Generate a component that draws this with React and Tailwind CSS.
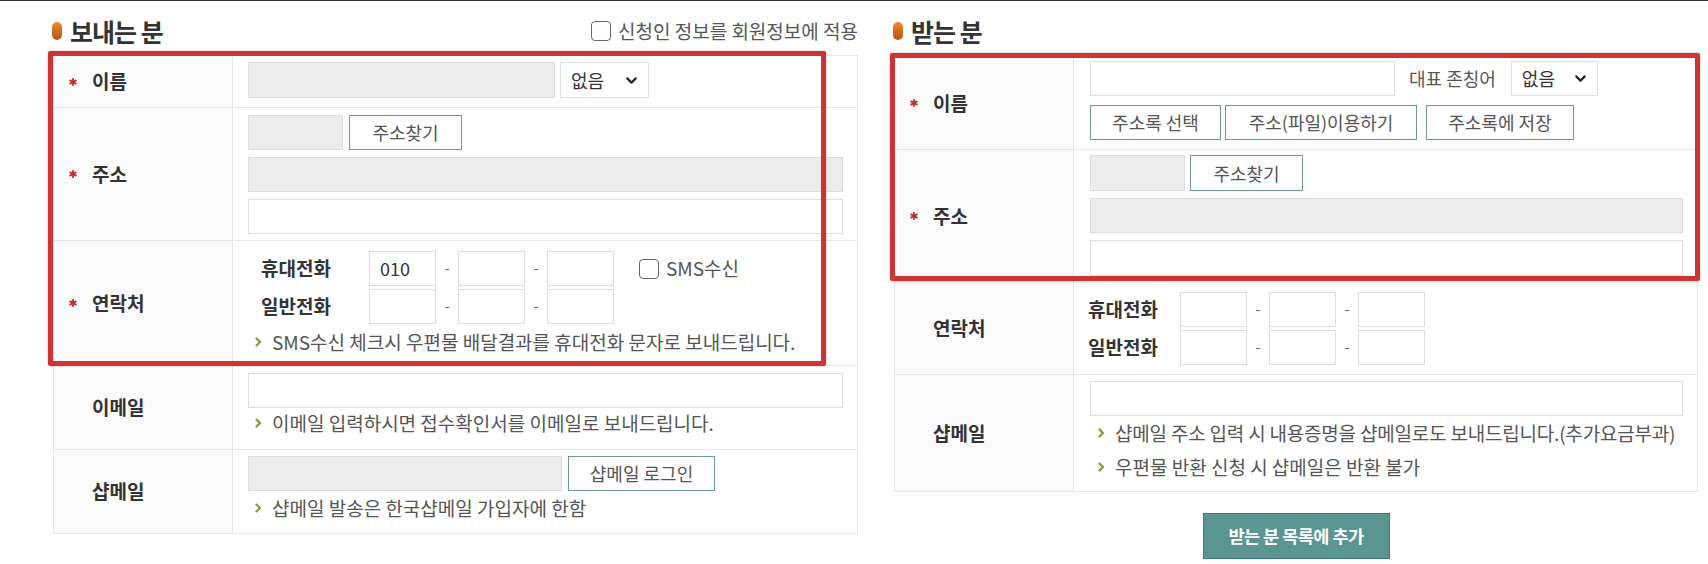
import { ChevronDown } from 'lucide-react';

const FONT = "font-['Noto_Sans_CJK_KR','Noto_Sans',sans-serif]";

function Arrow() {
  return (
    <svg width="7" height="10" viewBox="0 0 7 10" className="shrink-0">
      <path d="M1.5 1.5 L5 5 L1.5 8.5" fill="none" stroke="#8a9d3e" strokeWidth="2.4" strokeLinecap="round" strokeLinejoin="round" />
    </svg>
  );
}

function Star() {
  return (
    <svg width="8" height="8" viewBox="0 0 8 8" className="shrink-0">
      <g stroke="#b8322f" strokeWidth="1.8" strokeLinecap="round">
        <line x1="4" y1="0.8" x2="4" y2="7.2" />
        <line x1="1.2" y1="2.4" x2="6.8" y2="5.6" />
        <line x1="1.2" y1="5.6" x2="6.8" y2="2.4" />
      </g>
    </svg>
  );
}

function Help({ children, className = '' }) {
  return (
    <div className={`flex items-center gap-[10px] text-[19px] leading-[20px] text-[#555] whitespace-nowrap ${className}`}>
      <Arrow />
      <span>{children}</span>
    </div>
  );
}

function Field({ gray, className = '', value }) {
  return (
    <div
      className={`h-[35px] border border-[#dcdcdc] flex items-center pl-[10px] text-[18px] text-[#333] ${
        gray ? 'bg-[#ececec]' : 'bg-white'
      } ${className}`}
    >
      {value}
    </div>
  );
}

function Btn({ children, className = '' }) {
  return (
    <button className={`h-[35px] border border-[#6f9896] bg-white text-[18px] text-[#555] flex items-center justify-center ${className}`}>
      {children}
    </button>
  );
}

function Select({ className = '' }) {
  return (
    <div className={`h-[35px] border border-[#e0e0e0] bg-white flex items-center justify-between pl-[10px] pr-[8px] text-[18px] text-[#333] ${className}`}>
      <span>없음</span>
      <ChevronDown size={17} strokeWidth={3} className="text-[#222]" />
    </div>
  );
}

function Check({ label }) {
  return (
    <div className="flex items-center gap-[7px] text-[19px] text-[#555]">
      <span className="w-[20px] h-[20px] rounded-[4px] border-[1.5px] border-[#666] bg-white" />
      <span>{label}</span>
    </div>
  );
}

function Label({ req, children }) {
  return (
    <div className="bg-[#fafafa] border-r border-[#e6e6e6] flex items-center pl-[15px]">
      <span className="w-[23px] flex items-center">{req && <Star />}</span>
      <span className="text-[19px] font-bold text-[#333]">{children}</span>
    </div>
  );
}

function Row({ label, req, children, last }) {
  return (
    <div className={`grid grid-cols-[179px_1fr] ${last ? '' : 'border-b border-[#e6e6e6]'}`}>
      <Label req={req}>{label}</Label>
      {children}
    </div>
  );
}

function PhoneRow({ label, first, labelW }) {
  return (
    <div className="flex items-center">
      <span className={`text-[19px] font-bold text-[#333] ${labelW}`}>{label}</span>
      <Field className="w-[67px]" value={first} />
      <span className="w-[22px] text-center text-[#666] text-[15px]">-</span>
      <Field className="w-[67px]" />
      <span className="w-[22px] text-center text-[#666] text-[15px]">-</span>
      <Field className="w-[67px]" />
    </div>
  );
}

function Title({ children }) {
  return (
    <div className="flex items-center gap-[8px] -ml-[1px]">
      <span className="w-[10px] h-[18px] rounded-full bg-gradient-to-b from-[#f08a2c] to-[#b55510]" />
      <span className="text-[25px] leading-[34px] font-bold tracking-[-1px] text-[#333]">{children}</span>
    </div>
  );
}

export default function App() {
  return (
    <div className={`w-[1708px] h-[564px] bg-white overflow-hidden ${FONT}`}>
      <div className="h-[1px] bg-[#333]" />
      <div className="flex pl-[53px]">
        {/* 보내는 분 */}
        <div className="w-[805px]">
          <div className="h-[54px] pt-[13px] flex items-start justify-between">
            <Title>보내는 분</Title>
            <div className="mt-[3px]">
              <Check label="신청인 정보를 회원정보에 적용" />
            </div>
          </div>
          <div className="relative border border-[#e6e6e6]">
            <Row label="이름" req>
              <div className="h-[51px] pl-[15px] pt-[6px] flex gap-[5px]">
                <Field gray className="w-[307px] h-[36px]" />
                <Select className="w-[89px] h-[36px]" />
              </div>
            </Row>
            <Row label="주소" req>
              <div className="h-[132px] pl-[15px] pr-[14px] pt-[7px] flex flex-col gap-[7px]">
                <div className="flex gap-[6px]">
                  <Field gray className="w-[95px]" />
                  <Btn className="w-[113px]">주소찾기</Btn>
                </div>
                <Field gray />
                <Field />
              </div>
            </Row>
            <Row label="연락처" req>
              <div className="h-[124px] pl-[22px] pt-[10px]">
                <div className="pl-[6px] flex items-center">
                  <PhoneRow label="휴대전화" first="010" labelW="w-[108px]" />
                  <div className="ml-[25px]">
                    <Check label="SMS수신" />
                  </div>
                </div>
                <div className="pl-[6px] mt-[3px]">
                  <PhoneRow label="일반전화" labelW="w-[108px]" />
                </div>
                <Help className="mt-[8px]">SMS수신 체크시 우편물 배달결과를 휴대전화 문자로 보내드립니다.</Help>
              </div>
            </Row>
            <Row label="이메일">
              <div className="h-[83px] pl-[15px] pr-[14px] pt-[7px]">
                <Field />
                <Help className="mt-[5px] ml-[7px]">이메일 입력하시면 접수확인서를 이메일로 보내드립니다.</Help>
              </div>
            </Row>
            <Row label="샵메일" last>
              <div className="h-[83px] pl-[15px] pt-[6px]">
                <div className="flex gap-[6px]">
                  <Field gray className="w-[314px]" />
                  <Btn className="w-[147px] text-[#4d6a69]">샵메일 로그인</Btn>
                </div>
                <Help className="mt-[7px] ml-[7px]">샵메일 발송은 한국샵메일 가입자에 한함</Help>
              </div>
            </Row>
            <div className="absolute -left-[6px] -top-[5px] w-[778px] h-[315px] border-[5px] border-[#cc3535] rounded-[2px] pointer-events-none shadow-[0_0_2px_rgba(150,0,0,0.4)]" />
          </div>
        </div>

        {/* 받는 분 */}
        <div className="w-[804px] ml-[36px]">
          <div className="h-[55px] pt-[13px]">
            <Title>받는 분</Title>
          </div>
          <div className="relative border border-[#e6e6e6]">
            <Row label="이름" req>
              <div className="h-[92px] pl-[16px] pt-[4px]">
                <div className="flex items-center">
                  <Field className="w-[305px]" />
                  <span className="ml-[14px] text-[18px] text-[#555]">대표 존칭어</span>
                  <Select className="w-[87px] ml-[15px]" />
                </div>
                <div className="flex mt-[9px]">
                  <Btn className="w-[131px]">주소록 선택</Btn>
                  <Btn className="w-[192px] ml-[4px]">주소(파일)이용하기</Btn>
                  <Btn className="w-[148px] ml-[9px]">주소록에 저장</Btn>
                </div>
              </div>
            </Row>
            <Row label="주소" req>
              <div className="h-[132px] pl-[16px] pr-[14px] pt-[5px] flex flex-col gap-[7px]">
                <div className="flex gap-[5px]">
                  <Field gray className="w-[95px] h-[36px]" />
                  <Btn className="w-[113px] h-[36px]">주소찾기</Btn>
                </div>
                <Field gray />
                <Field className="h-[36px]" />
              </div>
            </Row>
            <Row label="연락처">
              <div className="h-[91px] pl-[14px] pt-[9px]">
                <PhoneRow label="휴대전화" labelW="w-[92px]" />
                <div className="mt-[3px]">
                  <PhoneRow label="일반전화" labelW="w-[92px]" />
                </div>
              </div>
            </Row>
            <Row label="샵메일" last>
              <div className="h-[116px] pl-[16px] pr-[14px] pt-[6px]">
                <Field className="h-[35px]" />
                <Help className="mt-[7px] ml-[8px] tracking-[-0.2px]">샵메일 주소 입력 시 내용증명을 샵메일로도 보내드립니다.(추가요금부과)</Help>
                <Help className="mt-[14px] ml-[8px]">우편물 반환 신청 시 샵메일은 반환 불가</Help>
              </div>
            </Row>
            <div className="absolute -left-[5px] -top-[4px] w-[810px] h-[228px] border-[5px] border-[#cc3535] rounded-[2px] pointer-events-none shadow-[0_0_2px_rgba(150,0,0,0.4)]" />
          </div>
          <div className="flex justify-center mt-[21px]">
            <button className="w-[187px] h-[46px] bg-[#5a9591] border border-[#3f7774] text-white text-[17.5px] font-bold tracking-[-0.5px]">
              받는 분 목록에 추가
            </button>
          </div>
        </div>
      </div>
    </div>
  );
}
